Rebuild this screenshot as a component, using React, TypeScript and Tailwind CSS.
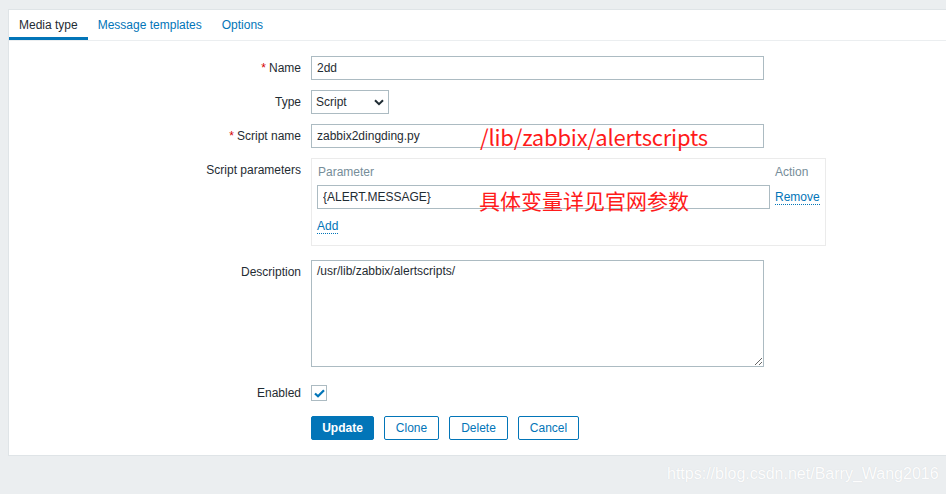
import React from "react";

const Label = ({ children, req }: { children: React.ReactNode; req?: boolean }) => (
  <div className="w-[292px] shrink-0 text-right leading-[24px] text-[12px] text-[#1f2c33]">
    {req && <span className="text-[#d40000] mr-[3px]">*</span>}
    {children}
  </div>
);

export default function App() {
  return (
    <div
      className="relative w-[946px] h-[494px] overflow-hidden bg-[#ebeef0] pl-[8px] pt-[9px]"
      style={{ fontFamily: '"Liberation Sans", Arial, sans-serif' }}
    >
      <div className="bg-white border-l border-t border-b border-[#dfe4e7] w-[950px]">
        {/* Tabs */}
        <div className="flex h-[31px] border-b border-[#ebeef0] text-[12px]">
          <div className="relative px-[10px] pt-[1px] leading-[28px] text-[#1f2c33]">
            Media type
            <div className="absolute left-0 right-0 bottom-0 h-[3px] bg-[#0275b8]" />
          </div>
          <div className="px-[10px] pt-[1px] leading-[28px] text-[#0275b8]">Message templates</div>
          <div className="px-[10px] pt-[1px] leading-[28px] text-[#0275b8]">Options</div>
        </div>

        {/* Form */}
        <div className="flex flex-col pt-[15px] pb-[15px] text-[12px] text-[#1f2c33]">
          <div className="flex gap-[10px] h-[24px]">
            <Label req>Name</Label>
            <input
              readOnly
              defaultValue="2dd"
              className="w-[453px] h-[24px] border border-[#acbbc2] px-[5px] text-[12px] text-[#1f2c33] outline-none"
            />
          </div>

          <div className="flex gap-[10px] h-[24px] mt-[10px]">
            <Label>Type</Label>
            <div className="w-[78px] h-[24px] border border-[#acbbc2] flex items-center justify-between pl-[4px] pr-[4px]">
              <span>Script</span>
              <svg width="10" height="7" viewBox="0 0 10 7">
                <path d="M1 1.2 L5 5.2 L9 1.2" fill="none" stroke="#1f2c33" strokeWidth="2" />
              </svg>
            </div>
          </div>

          <div className="flex gap-[10px] h-[24px] mt-[10px]">
            <Label req>Script name</Label>
            <input
              readOnly
              defaultValue="zabbix2dingding.py"
              className="w-[453px] h-[24px] border border-[#acbbc2] px-[5px] text-[12px] text-[#1f2c33] outline-none"
            />
          </div>

          <div className="flex gap-[10px] mt-[10px]">
            <Label>Script parameters</Label>
            <div className="w-[515px] h-[88px] border border-[#ebebeb] px-[5px] pt-[6px] flex flex-col">
              <div className="flex h-[14px] leading-[14px] text-[#768d99]">
                <div className="w-[458px] pl-[1px]">Parameter</div>
                <div>Action</div>
              </div>
              <div className="flex items-center mt-[6px] h-[24px]">
                <input
                  readOnly
                  defaultValue="{ALERT.MESSAGE}"
                  className="w-[453px] h-[24px] border border-[#acbbc2] px-[5px] text-[12px] text-[#1f2c33] outline-none"
                />
                <div className="ml-[5px] mt-[1px] text-[#0275b8] border-b border-dotted border-[#0275b8] leading-[13px]">
                  Remove
                </div>
              </div>
              <div className="mt-[11px] h-[14px] flex">
                <div className="text-[#0275b8] border-b border-dotted border-[#0275b8] leading-[13px]">
                  Add
                </div>
              </div>
            </div>
          </div>

          <div className="flex gap-[10px] mt-[14px]">
            <Label>Description</Label>
            <textarea
              readOnly
              defaultValue="/usr/lib/zabbix/alertscripts/"
              className="w-[453px] h-[107px] border border-[#acbbc2] px-[5px] py-[3px] text-[12px] leading-[14px] text-[#1f2c33] outline-none"
            />
          </div>

          <div className="flex gap-[10px] h-[24px] mt-[14px] items-center">
            <Label>Enabled</Label>
            <div className="w-[16px] h-[16px] border border-[#acbbc2] flex items-center justify-center">
              <svg width="11" height="9" viewBox="0 0 11 9">
                <path d="M1 4.5 L4 7.3 L10 1.2" fill="none" stroke="#0275b8" strokeWidth="2.2" />
              </svg>
            </div>
          </div>

          <div className="flex gap-[10px] h-[24px] mt-[11px]">
            <div className="w-[292px] shrink-0" />
            <div className="flex gap-[10px]">
              <div className="w-[63px] h-[24px] text-center bg-[#0275b8] border border-[#0275b8] rounded-[2px] text-white font-bold leading-[22px]">
                Update
              </div>
              <div className="w-[55px] h-[24px] text-center bg-white border border-[#0275b8] rounded-[2px] text-[#0275b8] leading-[22px]">
                Clone
              </div>
              <div className="w-[59px] h-[24px] text-center bg-white border border-[#0275b8] rounded-[2px] text-[#0275b8] leading-[22px]">
                Delete
              </div>
              <div className="w-[61px] h-[24px] text-center bg-white border border-[#0275b8] rounded-[2px] text-[#0275b8] leading-[22px]">
                Cancel
              </div>
            </div>
          </div>
        </div>
      </div>

      {/* Red annotations */}
      <div
        className="absolute left-[480px] top-[120px] text-[22px] leading-[32px] text-[#ff1a1a] tracking-[-0.2px]"
        style={{ fontFamily: '"Noto Sans CJK SC", "Noto Sans", sans-serif' }}
      >
        /lib/zabbix/alertscripts
      </div>
      <div
        className="absolute left-[479px] top-[184px] text-[21px] leading-[32px] text-[#ff1a1a]"
        style={{ fontFamily: '"Noto Sans CJK SC", sans-serif' }}
      >
        具体变量详见官网参数
      </div>

      {/* Watermark */}
      <div className="absolute left-[667px] top-[464px] text-[16px] leading-[20px] text-[#fdfdfd] [text-shadow:0_0_1px_#d2d6da]">
        https://blog.csdn.net/Barry_Wang2016
      </div>
    </div>
  );
}
